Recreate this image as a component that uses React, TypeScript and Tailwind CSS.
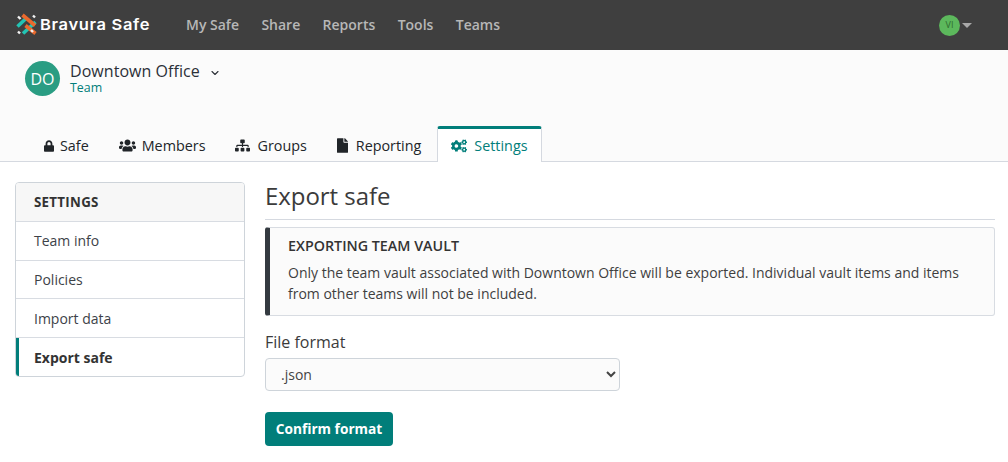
import React from "react";
import { FaLock, FaUsers, FaSitemap, FaFile, FaCogs } from "react-icons/fa";
import { ChevronDown } from "lucide-react";

function Logo() {
  return (
    <svg width="24" height="24" viewBox="0 0 24 24" className="shrink-0" fill="none" strokeWidth="3.6" strokeLinecap="butt">
      <path d="M2.5 13.5 L11 5.5" stroke="#23c4b4" />
      <path d="M8 20.5 L20.5 9" stroke="#23c4b4" />
      <path d="M7.5 2 L20 12.5" stroke="#ea6a2e" />
      <path d="M10.5 12.5 L20.5 20.5" stroke="#ea6a2e" />
      <path d="M3 3.5 L5.5 6 M18 2.5 L20 4.5 M3 18.5 L5 20.5 M16 17 L18 19" stroke="#f2f2f2" strokeWidth="2.4" />
    </svg>
  );
}

const tabs = [
  { label: "Safe", gap: "gap-[6px]", icon: <FaLock className="w-[10px] h-[12px]" /> },
  { label: "Members", gap: "gap-[6px]", icon: <FaUsers className="w-[17px] h-[17px]" /> },
  { label: "Groups", gap: "gap-[7px]", icon: <FaSitemap className="w-[15px] h-[15px]" /> },
  { label: "Reporting", gap: "gap-[8px]", icon: <FaFile className="w-[11px] h-[15px]" /> },
];

const side = ["Team info", "Policies", "Import data"];

export default function App() {
  return (
    <div className="w-[1008px] h-[462px] overflow-hidden bg-white text-[14px] text-[#333] font-['Open_Sans',sans-serif]">
      <nav className="h-[50px] bg-[#3f3f3f] flex items-center pl-[15px] pr-[36px]">
        <div className="flex items-center w-[171px]">
          <Logo />
          <span className="ml-[1px] font-['Inter',sans-serif] font-semibold text-[15px] tracking-[0.6px] text-white whitespace-nowrap origin-left scale-x-[1.1]">Bravura Safe</span>
        </div>
        <div className="flex gap-[22.4px] font-semibold text-[14px] text-[#b7b7b7] -mt-[2px]">
          <span>My Safe</span>
          <span>Share</span>
          <span>Reports</span>
          <span>Tools</span>
          <span>Teams</span>
        </div>
        <div className="ml-auto flex items-center gap-[2px]">
          <div className="w-[21px] h-[21px] rounded-full bg-[#5cb85c] flex items-center justify-center text-[9px] text-[#2f6b2f]">VI</div>
          <div className="w-0 h-0 border-x-[5px] border-x-transparent border-t-[5px] border-t-[#a8a8a8]" />
        </div>
      </nav>

      <header className="h-[112px] bg-[#fbfbfb] border-b border-[#d5d9e0] flex flex-col justify-between">
        <div className="flex items-start pl-[25px] pt-[11px]">
          <div className="w-[35px] h-[35px] rounded-full bg-[#2a9d83] text-white flex items-center justify-center text-[16px]">DO</div>
          <div className="ml-[10px]">
            <div className="flex items-center text-[16px] leading-[21px] text-[#2b3038]">
              <span className="tracking-[0.05px]">Downtown Office</span>
              <ChevronDown className="ml-[9px] mt-[3px] w-[12px] h-[12px]" strokeWidth={2.2} />
            </div>
            <div className="text-[12.4px] leading-[12px] text-[#017e7a]">Team</div>
          </div>
        </div>
        <div className="flex pl-[29px] h-[36px] -mb-[1px] items-stretch">
          {tabs.map((t) => (
            <div key={t.label} className={`px-[15px] pt-[3px] flex items-center ${t.gap} text-[14.35px] text-[#212529] font-medium`}>
              {t.icon}
              <span>{t.label}</span>
            </div>
          ))}
          <div className="ml-[1px] pl-[13px] pr-[13px] pt-[1px] flex items-center gap-[7px] bg-white border-x border-[#d5d9e0] border-t-[3px] border-t-[#017e7a] rounded-t-[3px] text-[14.35px] text-[#017e7a] font-medium">
            <FaCogs className="w-[16px] h-[16px]" />
            <span>Settings</span>
          </div>
        </div>
      </header>

      <main className="flex pl-[15px] pr-[13px] pt-[20px] gap-[20px]">
        <aside className="w-[230px] shrink-0 h-[195px] border border-[#ced4da] rounded-[4px] overflow-hidden flex flex-col">
          <div className="h-[39px] pt-[1px] bg-[#f7f7f7] border-b border-[#d8dce2] flex items-center pl-[18px] font-bold text-[13.3px] tracking-[0.3px] text-[#333]">SETTINGS</div>
          <div className="h-[39px] pb-[2px] border-b border-[#d8dce2] flex items-center pl-[18px] text-[#3d4248]">{side[0]}</div>
          <div className="h-[38px] pb-[1px] border-b border-[#d8dce2] flex items-center pl-[18px] text-[#3d4248]">{side[1]}</div>
          <div className="h-[39px] border-b border-[#d8dce2] flex items-center pl-[18px] text-[#3d4248]">{side[2]}</div>
          <div className="flex-1 flex items-center pl-[15px] border-l-[3px] border-l-[#017e7a] font-bold text-[#333]">Export safe</div>
        </aside>
        <section className="flex-1 min-w-0">
          <h1 className="text-[24px] leading-[27px] h-[38px] border-b border-[#d5d9e0] text-[#3b3b3b] tracking-[-0.05px]">Export safe</h1>
          <div className="mt-[7px] h-[89px] border border-[#d8dce2] border-l-[5px] border-l-[#343a40] rounded-[3px] bg-[#fbfbfb] pl-[18px] pt-[8px]">
            <div className="font-semibold text-[14.3px] leading-[20px] text-[#333]">EXPORTING TEAM VAULT</div>
            <p className="mt-[6px] text-[14px] leading-[21px] text-[#3f3f3f] pr-[20px]">
              Only the team vault associated with Downtown Office will be exported. Individual vault items and items from other teams will not be included.
            </p>
          </div>
          <label className="block mt-[15px] text-[16px] leading-[22px] font-medium text-[#3b3b3b]">File format</label>
          <select className="block mt-[5px] w-[355px] h-[33px] border border-[#ced4da] rounded-[4px] bg-[#fbfbfb] pl-[11px] text-[14px] text-[#444]">
            <option>.json</option>
          </select>
          <button className="block mt-[21px] h-[34px] w-[128px] rounded-[4px] bg-[#017e7a] text-white font-bold text-[13.7px]">Confirm format</button>
        </section>
      </main>
    </div>
  );
}
